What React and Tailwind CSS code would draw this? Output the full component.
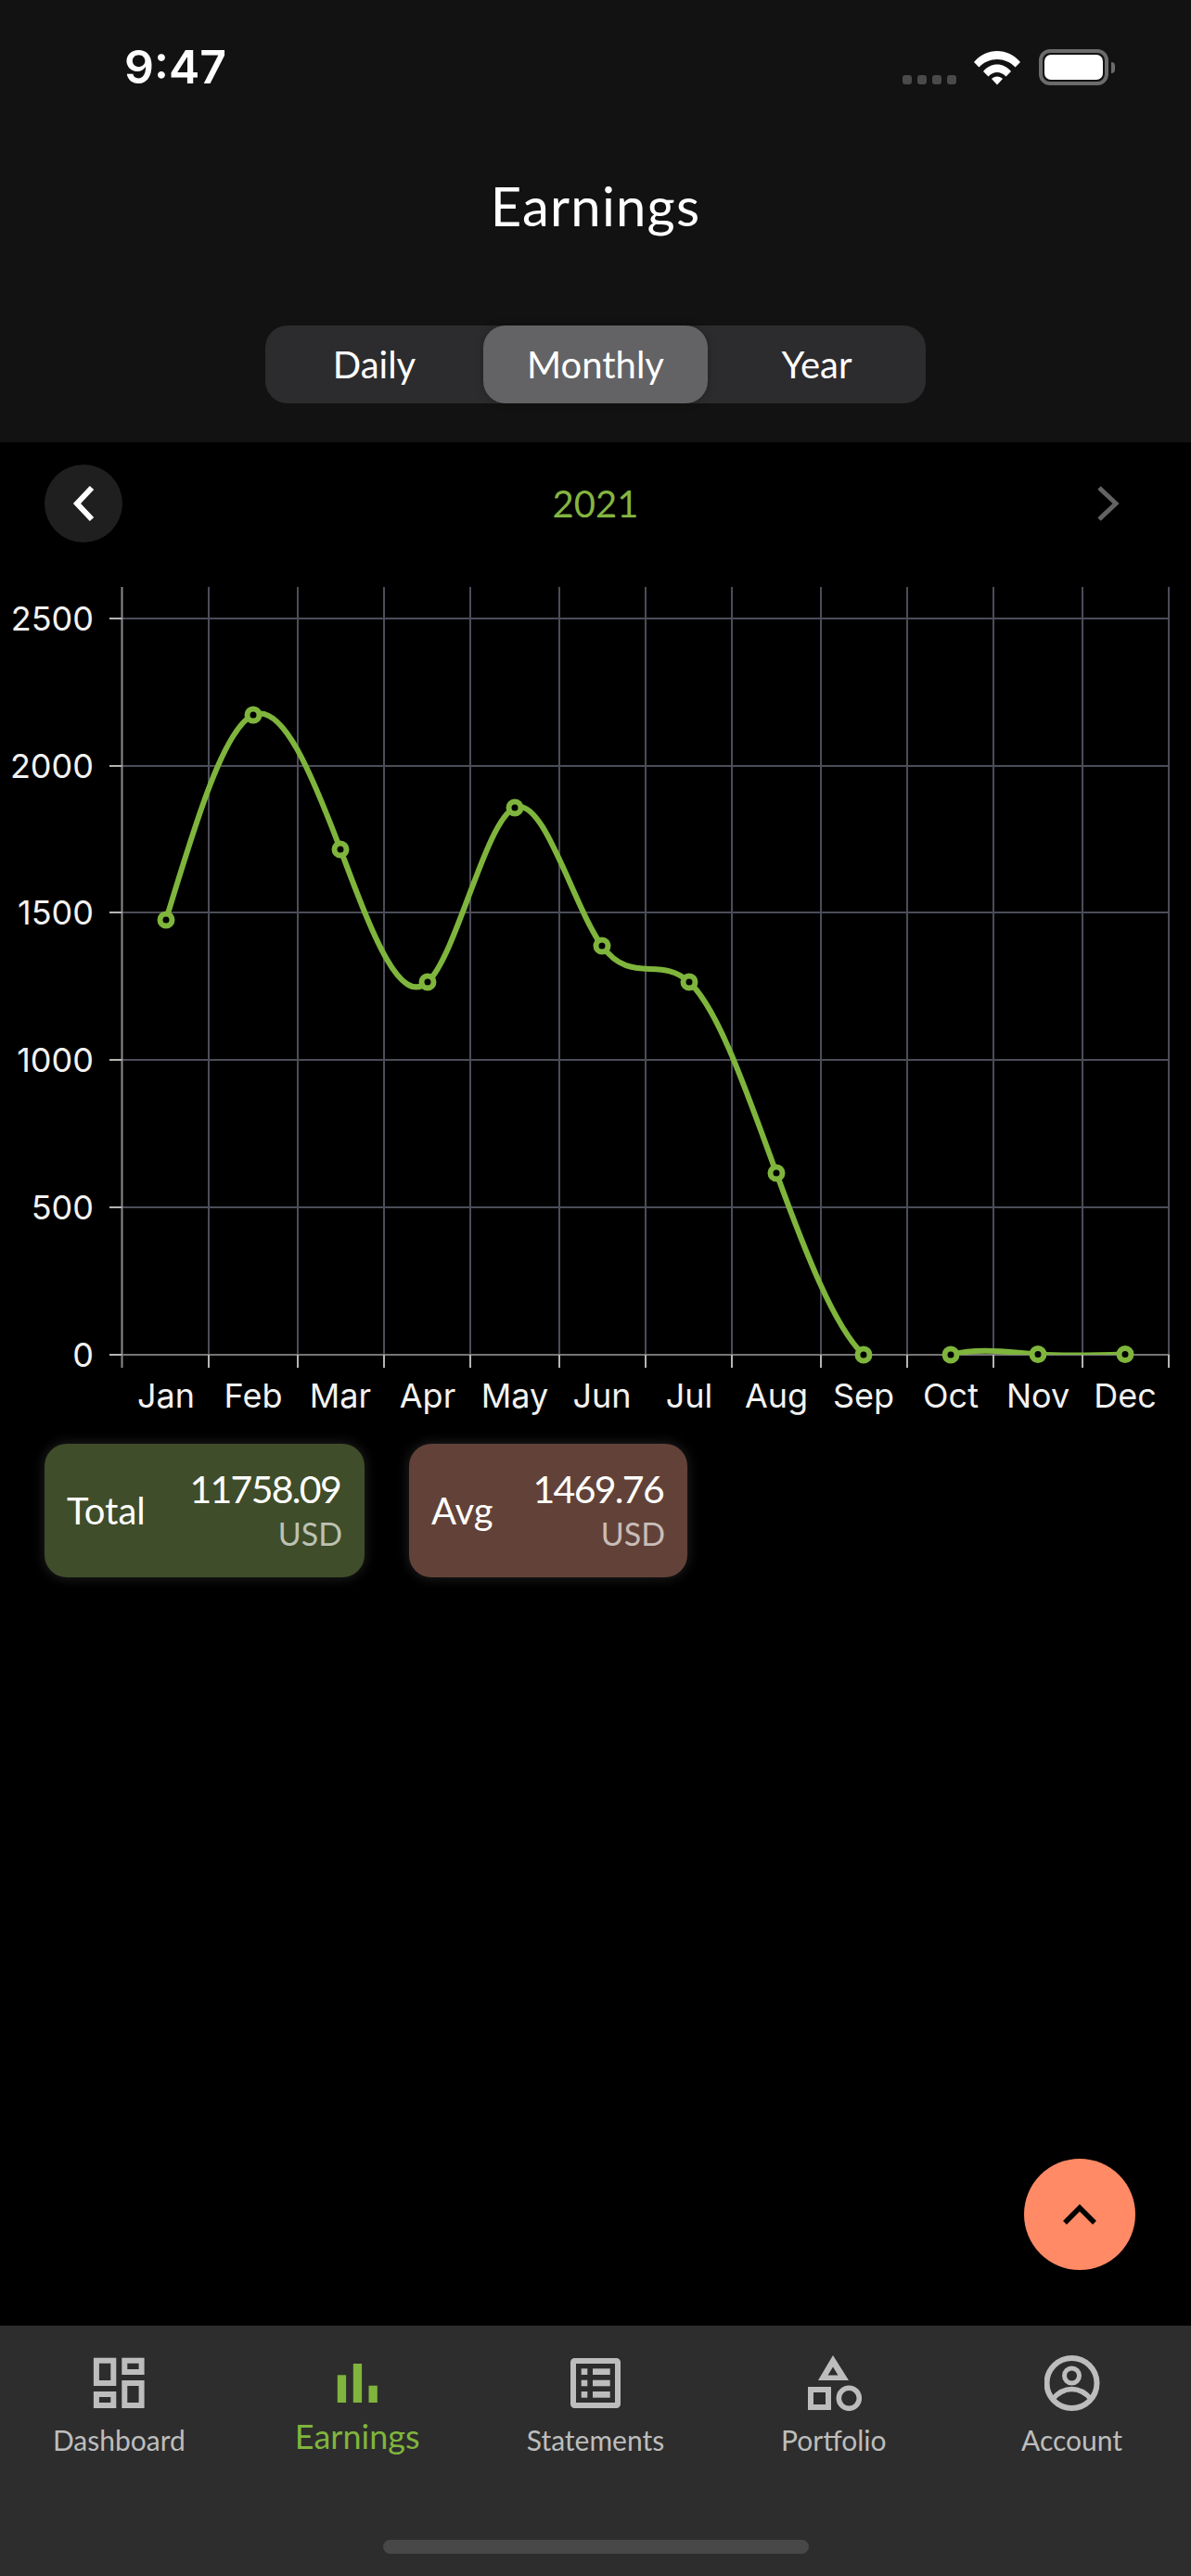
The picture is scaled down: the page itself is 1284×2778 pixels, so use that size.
import React from "react";

const GREEN = "#7fb53c";
const gridX = [225, 321, 414, 507, 603, 696, 789, 885, 978, 1071, 1167, 1260];
const axisX = 131.5;
const yTicks = [
  { label: "2500", y: 667 },
  { label: "2000", y: 826 },
  { label: "1500", y: 984 },
  { label: "1000", y: 1143 },
  { label: "500", y: 1302 },
  { label: "0", y: 1461 },
];
const points = [
  { m: "Jan", x: 179, y: 992 },
  { m: "Feb", x: 273, y: 771 },
  { m: "Mar", x: 367, y: 916 },
  { m: "Apr", x: 461, y: 1059 },
  { m: "May", x: 555, y: 871 },
  { m: "Jun", x: 649, y: 1020 },
  { m: "Jul", x: 743, y: 1059 },
  { m: "Aug", x: 837, y: 1265 },
  { m: "Sep", x: 931, y: 1461 },
  { m: "Oct", x: 1025, y: 1461 },
  { m: "Nov", x: 1119, y: 1460.5 },
  { m: "Dec", x: 1213, y: 1460.5 },
];

function controlPoints(x) {
  const n = x.length - 1;
  const a = new Array(n);
  const b = new Array(n);
  const r = new Array(n);
  a[0] = 0;
  b[0] = 2;
  r[0] = x[0] + 2 * x[1];
  for (let i = 1; i < n - 1; ++i) {
    a[i] = 1;
    b[i] = 4;
    r[i] = 4 * x[i] + 2 * x[i + 1];
  }
  a[n - 1] = 2;
  b[n - 1] = 7;
  r[n - 1] = 8 * x[n - 1] + x[n];
  for (let i = 1; i < n; ++i) {
    const m = a[i] / b[i - 1];
    b[i] -= m;
    r[i] -= m * r[i - 1];
  }
  a[n - 1] = r[n - 1] / b[n - 1];
  for (let i = n - 2; i >= 0; --i) a[i] = (r[i] - a[i + 1]) / b[i];
  b[n - 1] = (x[n] + a[n - 1]) / 2;
  for (let i = 0; i < n - 1; ++i) b[i] = 2 * x[i + 1] - a[i + 1];
  return [a, b];
}

function naturalPath(pts) {
  const [ax, bx] = controlPoints(pts.map((p) => p.x));
  const [ay, by] = controlPoints(pts.map((p) => p.y));
  let d = `M${pts[0].x},${pts[0].y}`;
  for (let i = 0; i < pts.length - 1; i++) {
    d += ` C${ax[i]},${ay[i]} ${bx[i]},${by[i]} ${pts[i + 1].x},${pts[i + 1].y}`;
  }
  return d;
}

function Chart() {
  const curve = naturalPath(points);
  return (
    <svg width="1284" height="915" viewBox="0 620 1284 915" className="block">
      <defs>
        <clipPath id="plot">
          <rect x="131" y="620" width="1130" height="841" />
        </clipPath>
      </defs>
      {gridX.map((x) => (
        <line key={x} x1={x} x2={x} y1="633" y2="1461" stroke="#4b4d59" strokeWidth="2" />
      ))}
      {yTicks.slice(0, 5).map((t) => (
        <line key={t.y} x1={axisX} x2="1261" y1={t.y} y2={t.y} stroke="#4b4d59" strokeWidth="2" />
      ))}
      <line x1={axisX} x2={axisX} y1="633" y2="1475" stroke="#8c8c8c" strokeWidth="2" />
      <line x1={axisX} x2="1261" y1="1461" y2="1461" stroke="#757575" strokeWidth="2" />
      {yTicks.map((t) => (
        <line key={t.y} x1="118" x2={axisX} y1={t.y} y2={t.y} stroke="#b5b5b5" strokeWidth="2" />
      ))}
      {gridX.map((x) => (
        <line key={x} x1={x} x2={x} y1="1461" y2="1475" stroke="#b5b5b5" strokeWidth="2" />
      ))}
      <path d={curve} clipPath="url(#plot)" fill="none" stroke={GREEN} strokeWidth="6" />
      {points.map((p) => (
        <circle key={p.m} cx={p.x} cy={p.y} r="6.5" fill="#000" stroke={GREEN} strokeWidth="6" />
      ))}
      <g fill="#f2f2f2" className="font-['Inter',sans-serif] text-[36px]">
        {yTicks.map((t) => (
          <text key={t.label} x="101" y={t.y + 13} textAnchor="end">
            {t.label}
          </text>
        ))}
        {points.map((p) => (
          <text key={p.m} x={p.x} y="1518" textAnchor="middle">
            {p.m}
          </text>
        ))}
      </g>
    </svg>
  );
}

function StatCard({ label, value, bg, w, unit }) {
  return (
    <div
      className={`flex h-[144px] items-center justify-between rounded-[24px] pl-6 pr-6 shadow-[0_0_14px_rgba(255,255,255,0.14)] ${bg} ${w}`}
    >
      <span className="text-[40px] text-white">{label}</span>
      <div className="mb-[5px] flex flex-col items-end">
        <span className="mr-[2px] text-[41px] leading-[50px] tracking-[-1.7px] text-white">{value}</span>
        <span className={`mt-[4px] text-[34px] leading-[38px] ${unit}`}>USD</span>
      </div>
    </div>
  );
}

function StatusBar() {
  return (
    <div className="flex h-[100px] items-start justify-between pl-[134px] pr-[82px] pt-[46px]">
      <span className="font-['Inter',sans-serif] text-[50px] leading-[52px] font-semibold text-white">9:47</span>
      <div className="flex items-start pt-[7px]">
        <div className="mt-[28px] flex gap-[6px]">
          {[0, 1, 2, 3].map((i) => (
            <span key={i} className="block h-[10px] w-[10px] rounded-[3px] bg-[#4a4a4a]" />
          ))}
        </div>
        <svg width="52" height="38" viewBox="0 0 52 38" className="ml-[18px] mt-[1px]">
          <path d="M1,13 C14,-3 38,-3 51,13 L45.5,18.5 C35,7 17,7 6.5,18.5 Z" fill="#fff" />
          <path d="M11,23 C19,13 33,13 41,23 L35.5,28.5 C30,22.5 22,22.5 16.5,28.5 Z" fill="#fff" />
          <path d="M20,31 C23,27.5 29,27.5 32,31 L26,37.5 Z" fill="#fff" />
        </svg>
        <div className="ml-[19px] flex h-[39px] w-[75px] items-center justify-center rounded-[12px] border-4 border-[#6b6b6b]">
          <div className="h-[27px] w-[63px] rounded-[7px] bg-white" />
        </div>
        <div className="ml-[3px] mt-[14px] h-[12px] w-[4px] rounded-r-[4px] bg-[#6b6b6b]" />
      </div>
    </div>
  );
}

function Segmented() {
  return (
    <div className="mx-auto mt-[97px] flex h-[84px] w-[712px] items-center rounded-[24px] bg-[#2c2c2e] text-[40px] text-white">
      <div className="flex h-full w-[235px] items-center justify-center">Daily</div>
      <div className="flex h-full w-[242px] items-center justify-center rounded-[24px] bg-[#636366] shadow-[0_0_10px_rgba(0,0,0,0.25)]">
        Monthly
      </div>
      <div className="flex h-full w-[235px] items-center justify-center">Year</div>
    </div>
  );
}

function YearRow() {
  return (
    <div className="mt-[24px] grid h-[84px] grid-cols-[1fr_auto_1fr] items-center px-[48px]">
      <div className="flex h-[84px] w-[84px] items-center justify-center rounded-full bg-[#1f1f1f]">
        <svg width="28" height="40" viewBox="0 0 28 40">
          <path d="M23,3 L7,20 L23,37" fill="none" stroke="#fff" strokeWidth="6" />
        </svg>
      </div>
      <span className="text-[40px] text-[#84b540]">2021</span>
      <svg width="28" height="40" viewBox="0 0 28 40" className="mr-[27px] justify-self-end">
        <path d="M4,3 L22,20 L4,37" fill="none" stroke="#636363" strokeWidth="5" />
      </svg>
    </div>
  );
}

const ICON = "#bdbdbd";

function DashboardIcon() {
  return (
    <svg width="60" height="60" viewBox="0 0 60 60" fill="none" stroke={ICON} strokeWidth="6">
      <rect x="5.9" y="5.7" width="18.4" height="24.3" />
      <rect x="5.9" y="42" width="18.4" height="12" />
      <rect x="36.3" y="5.7" width="18.3" height="12.3" />
      <rect x="36.3" y="30" width="18.3" height="24" />
    </svg>
  );
}
function EarningsIcon() {
  return (
    <svg width="60" height="60" viewBox="0 0 60 60" fill={GREEN}>
      <rect x="8.8" y="21.3" width="9.3" height="29.7" />
      <rect x="25.8" y="9" width="9.3" height="42" />
      <rect x="42.5" y="32.7" width="9.3" height="18.3" />
    </svg>
  );
}
function StatementsIcon() {
  return (
    <svg width="60" height="60" viewBox="0 0 60 60" fill={ICON}>
      <rect x="6" y="6" width="48" height="48" rx="1.5" fill="none" stroke={ICON} strokeWidth="6" />
      <rect x="14.7" y="14.3" width="6.6" height="6.7" />
      <rect x="27" y="14.3" width="18.7" height="6.7" />
      <rect x="14.7" y="26.7" width="6.6" height="6.6" />
      <rect x="27" y="26.7" width="18.7" height="6.6" />
      <rect x="14.7" y="39" width="6.6" height="6.7" />
      <rect x="27" y="39" width="18.7" height="6.7" />
    </svg>
  );
}
function PortfolioIcon() {
  return (
    <svg width="60" height="60" viewBox="0 0 60 60" fill="none" stroke={ICON}>
      <path d="M29,0 L46,27 L13,27 Z M29,12.5 L23.5,21.5 L34.5,21.5 Z" fill={ICON} fillRule="evenodd" stroke="none" />
      <rect x="5" y="37" width="19" height="19" strokeWidth="6" />
      <circle cx="46.3" cy="46.3" r="11" strokeWidth="5.5" />
    </svg>
  );
}
function AccountIcon() {
  return (
    <svg width="60" height="60" viewBox="0 0 60 60" fill="none" stroke={ICON} strokeWidth="6">
      <circle cx="29.5" cy="30" r="27" />
      <circle cx="29.5" cy="22" r="8" strokeWidth="5" />
      <path d="M9,47 C15,40 22,36.5 29.5,36.5 C37,36.5 44,40 50,47" strokeWidth="5.5" />
    </svg>
  );
}

function NavItem({ icon, label, active }) {
  return (
    <div className="flex flex-col items-center">
      {icon}
      {active ? (
        <span className="mt-[6px] text-[36px] leading-[42px] text-[#7fb53c]">{label}</span>
      ) : (
        <span className="mt-[13px] text-[30px] leading-[36px] text-[#bdbdbd]">{label}</span>
      )}
    </div>
  );
}

function BottomNav() {
  return (
    <div className="relative h-[270px] bg-[#2d2d2d] pt-[32px]">
      <div className="grid grid-cols-5">
        <NavItem icon={<DashboardIcon />} label="Dashboard" />
        <NavItem icon={<EarningsIcon />} label="Earnings" active />
        <NavItem icon={<StatementsIcon />} label="Statements" />
        <NavItem icon={<PortfolioIcon />} label="Portfolio" />
        <NavItem icon={<AccountIcon />} label="Account" />
      </div>
      <div className="absolute bottom-[24px] left-[413px] h-[15px] w-[459px] rounded-full bg-[#484848]" />
    </div>
  );
}

export default function App() {
  return (
    <div className="relative flex h-[2778px] w-[1284px] flex-col overflow-hidden bg-black font-['Lato',sans-serif]">
      <header className="h-[477px] bg-[#121212]">
        <StatusBar />
        <h1 className="mt-[90px] text-center text-[58px] leading-[64px] font-normal tracking-[1.2px] text-white">Earnings</h1>
        <Segmented />
      </header>
      <YearRow />
      <div className="mt-[35px]">
        <Chart />
      </div>
      <div className="mt-[22px] flex gap-[48px] pl-[48px]">
        <StatCard label="Total" value="11758.09" bg="bg-[#3f4d2a]" w="w-[345px]" unit="text-[#bdc2b3]" />
        <StatCard label="Avg" value="1469.76" bg="bg-[#624238]" w="w-[300px]" unit="text-[#c9bdb8]" />
      </div>
      <div className="flex-1" />
      <BottomNav />
      <button className="absolute left-[1104px] top-[2328px] flex h-[120px] w-[120px] items-center justify-center rounded-full bg-[#ff8a65]">
        <svg width="40" height="28" viewBox="0 0 40 28">
          <path d="M4,23 L20,7 L36,23" fill="none" stroke="#000" strokeWidth="5.5" />
        </svg>
      </button>
    </div>
  );
}
